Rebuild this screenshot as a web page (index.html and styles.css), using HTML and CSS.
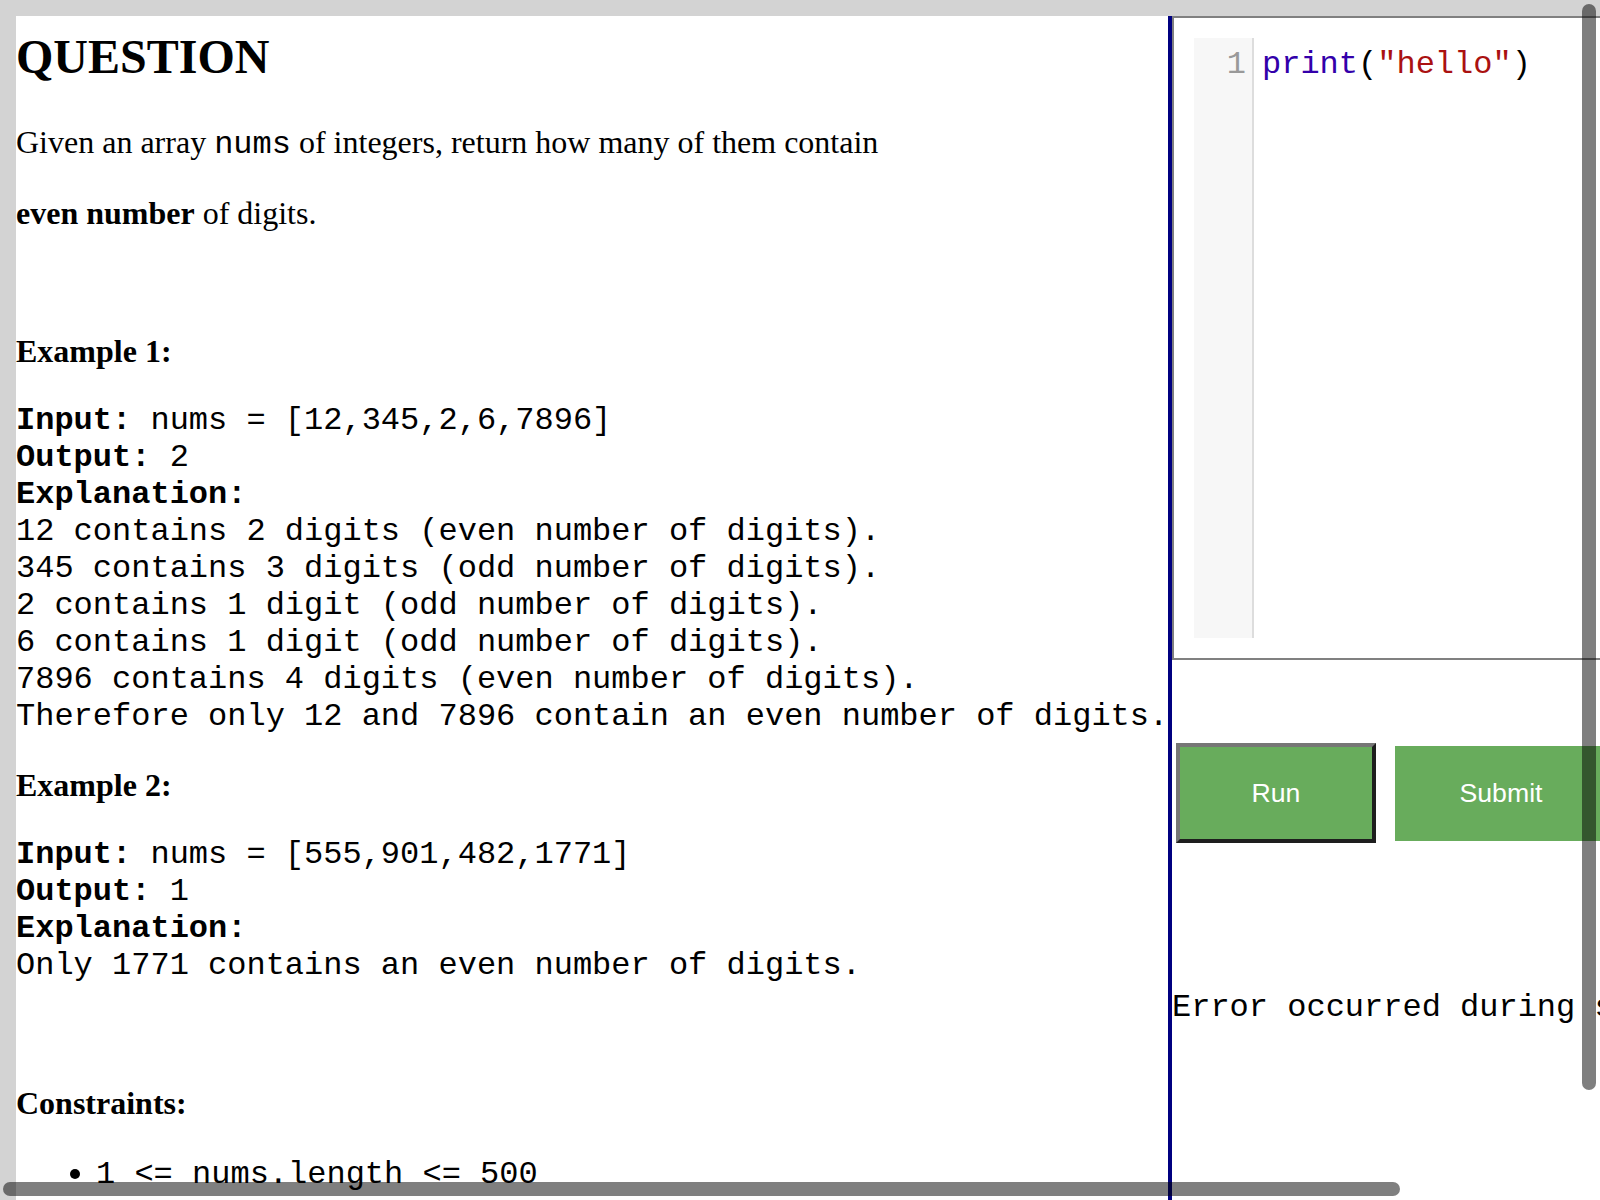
FILE: index.html
```html
<!DOCTYPE html>
<html lang="en">
<head>
<meta charset="utf-8">
<title>Question</title>
<link rel="stylesheet" href="styles.css">
</head>
<body>
<div class="page">
  <section class="problem">
    <h1 class="title">QUESTION</h1>
    <p>Given an array <code>nums</code> of integers, return how many of them contain</p>
    <p><strong>even number</strong> of digits.</p>
    <p>&nbsp;</p>
    <p><strong>Example 1:</strong></p>
<pre><strong>Input:</strong> nums = [12,345,2,6,7896]
<strong>Output:</strong> 2
<strong>Explanation:</strong>
12 contains 2 digits (even number of digits).
345 contains 3 digits (odd number of digits).
2 contains 1 digit (odd number of digits).
6 contains 1 digit (odd number of digits).
7896 contains 4 digits (even number of digits).
Therefore only 12 and 7896 contain an even number of digits.</pre>
    <p><strong>Example 2:</strong></p>
<pre><strong>Input:</strong> nums = [555,901,482,1771]
<strong>Output:</strong> 1
<strong>Explanation:</strong>
Only 1771 contains an even number of digits.</pre>
    <p>&nbsp;</p>
    <p><strong>Constraints:</strong></p>
    <ul class="constraints">
      <li><code>1 &lt;= nums.length &lt;= 500</code></li>
    </ul>
  </section>
  <section class="workspace">
    <div class="editor-box">
      <div class="cm">
        <div class="gutter"><div class="lineno">1</div></div>
        <div class="code"><span class="kw">print</span>(<span class="str">"hello"</span>)</div>
      </div>
    </div>
    <div class="actions">
      <button class="btn run">Run</button>
      <button class="btn submit">Submit</button>
    </div>
    <pre class="output">Error occurred during submission</pre>
  </section>
</div>
<div class="scroll-v"></div>
<div class="scroll-h"></div>
</body>
</html>
```
FILE: styles.css
```css
html, body {
  margin: 0;
  padding: 0;
  height: 100%;
  overflow: hidden;
}

body {
  background: #d3d3d3;
}

.page {
  display: flex;
  align-items: stretch;
  padding: 16px 0 0 16px;
  min-height: 1400px;
}

.problem {
  flex: none;
  width: 1152px;
  background: #ffffff;
  border-right: 4px solid #000080;
  font-family: "Liberation Serif", "Times New Roman", serif;
  font-size: 32px;
  color: #000;
}

.title {
  margin: 13px 0 40px;
  font-size: 48px;
  font-weight: bold;
  line-height: normal;
}

.problem p {
  margin: 32px 0;
  line-height: normal;
}

.problem code {
  font-family: "Liberation Mono", "Courier New", monospace;
  font-size: 32px;
}

.problem pre {
  margin: 32px 0;
  font-family: "Liberation Mono", "Courier New", monospace;
  font-size: 32px;
  line-height: normal;
  white-space: pre;
}

.constraints {
  margin: 32px 0;
  padding-left: 80px;
  line-height: normal;
}

.workspace {
  flex: none;
  width: 700px;
  background: #ffffff;
}

.editor-box {
  width: 460px;
  border: 2px solid #808080;
  padding: 20px;
}

.cm {
  display: flex;
  height: 600px;
  background: #ffffff;
  font-family: "Liberation Mono", "Courier New", monospace;
  font-size: 32px;
  line-height: normal;
}

.gutter {
  flex: none;
  width: 58px;
  background: #f7f7f7;
  border-right: 2px solid #dddddd;
  padding-top: 8px;
  box-sizing: content-box;
}

.lineno {
  text-align: right;
  padding-right: 6px;
  color: #999999;
}

.code {
  padding: 8px 8px 0;
  color: #000;
  white-space: pre;
}

.kw {
  color: #3300aa;
}

.str {
  color: #aa1111;
}

.actions {
  display: flex;
  align-items: baseline;
  gap: 19px;
  margin-top: 83px;
  padding-left: 4px;
}

.btn {
  font-family: "Liberation Sans", Arial, sans-serif;
  font-size: 26.67px;
  color: #ffffff;
  background: #68ac5c;
  box-sizing: border-box;
  padding: 0;
  margin: 0;
}

.run {
  width: 200px;
  height: 100px;
  border: 4px solid;
  border-color: #767676 #1e1e1e #1e1e1e #767676;
}

.submit {
  width: 212px;
  height: 95px;
  border: none;
}

.output {
  margin: 146px 0 0;
  font-family: "Liberation Mono", "Courier New", monospace;
  font-size: 32px;
  line-height: normal;
  white-space: pre;
  color: #000;
}

.scroll-v {
  position: fixed;
  left: 1582px;
  top: 4px;
  width: 14px;
  height: 1086px;
  border-radius: 7px;
  background: rgba(0, 0, 0, 0.5);
}

.scroll-h {
  position: fixed;
  left: 3px;
  top: 1182px;
  width: 1397px;
  height: 14px;
  border-radius: 7px;
  background: rgba(0, 0, 0, 0.5);
}
```
